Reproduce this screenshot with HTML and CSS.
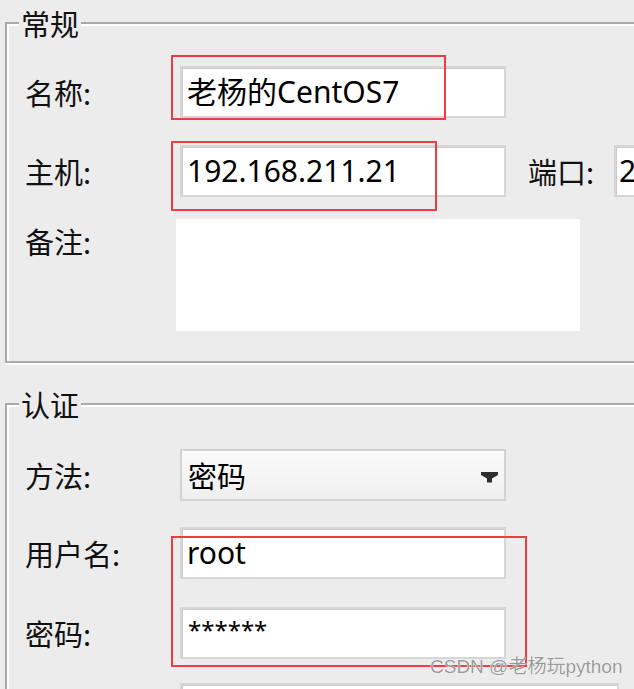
FILE: index.html
```html
<!DOCTYPE html>
<html lang="zh-CN">
<head>
<meta charset="utf-8">
<title>会话属性</title>
<link rel="stylesheet" href="styles.css">
</head>
<body>
<div class="page">
  <fieldset class="group general">
    <legend>常规</legend>
    <div class="row r-name">
      <span class="lbl">名称:</span>
      <div class="input w-std">老杨的CentOS7</div>
    </div>
    <div class="row r-host">
      <span class="lbl">主机:</span>
      <div class="input w-std">192.168.211.21</div>
      <span class="lbl-inline">端口:</span>
      <div class="input port">2</div>
    </div>
    <div class="row r-note">
      <span class="lbl">备注:</span>
      <div class="textarea"></div>
    </div>
  </fieldset>

  <fieldset class="group auth">
    <legend>认证</legend>
    <div class="row r-method">
      <span class="lbl">方法:</span>
      <div class="combo w-std">
        <span>密码</span>
        <svg class="arrow" width="17" height="11" viewBox="0 0 17 11"><path d="M0 0H17V3L11 6.5V10.5H6V6.5L0 3Z" fill="#2e2e2e"/></svg>
      </div>
    </div>
    <div class="row r-user">
      <span class="lbl">用户名:</span>
      <div class="input w-std">root</div>
    </div>
    <div class="row r-pass">
      <span class="lbl">密码:</span>
      <div class="input w-std pass">******</div>
    </div>
    <div class="row r-more">
      <span class="lbl"></span>
      <div class="input w-wide"></div>
    </div>
  </fieldset>
</div>

<div class="mark mark-name"></div>
<div class="mark mark-host"></div>
<div class="mark mark-cred"></div>
<div class="watermark">CSDN @老杨玩python</div>
</body>
</html>
```
FILE: styles.css
```css
html, body {
  margin: 0;
  height: 689px;
  overflow: hidden;
  background: #ececec;
}
body {
  position: relative;
  font-family: "Noto Sans", "Noto Sans CJK SC", sans-serif;
  color: #111;
}
.page {
  padding: 8px 0 0 5px;
  width: 760px;
}
.group {
  margin: 0;
  padding: 28px 0 30px 18px;
  border: 2px solid #a9a9a9;
  border-right: none;
  box-shadow: inset 2px 2px 0 #fff, 0 2px 0 #fff;
  min-width: 0;
}
.group legend {
  font-family: "Noto Sans CJK SC", sans-serif;
  font-size: 29px;
  line-height: 30px;
  padding: 0 2px;
  margin-left: -6px;
  background: #ececec;
}
.auth {
  margin-top: 26px;
  padding-top: 30px;
  padding-bottom: 0;
  height: 320px;
}
.row {
  display: flex;
  align-items: center;
  height: 52px;
}
.r-host { margin-top: 27px; }
.r-note { margin-top: 22px; height: 112px; align-items: flex-start; }
.r-user { margin-top: 26px; }
.r-pass { margin-top: 28px; }
.r-more { margin-top: 24px; }

.lbl, .lbl-inline {
  font-family: "Noto Sans CJK SC", sans-serif;
  font-size: 29px;
  line-height: 40px;
}
.lbl {
  width: 155px;
  flex: none;
}
.r-note .lbl { line-height: 44px; }
.lbl-inline {
  margin-left: 22px;
  margin-right: 20px;
}
.input, .combo {
  box-sizing: border-box;
  height: 52px;
  border: 2px solid #d6d6d6;
  box-shadow: inset 1px 1px 0 #cbcbcb;
  background: #fff;
  font-size: 30px;
  line-height: 48px;
  padding-left: 5px;
  white-space: nowrap;
  flex: none;
  color: #000;
}
.w-std { width: 326px; }
.w-wide { width: 439px; }
.port { width: 80px; padding-left: 3px; }
.pass { line-height: 42px; font-size: 24px; padding-left: 6px; }
.textarea {
  width: 404px;
  height: 112px;
  margin-left: -4px;
  background: #fff;
  flex: none;
}
.combo {
  display: flex;
  align-items: center;
  justify-content: space-between;
  padding-left: 6px;
  padding-right: 6px;
  background: linear-gradient(#fbfbfb, #efefef);
  box-shadow: none;
  border-color: #d3d3d3;
}
.combo span {
  font-family: "Noto Sans CJK SC", sans-serif;
  font-size: 29px;
}
.arrow { margin-top: 4px; }

.mark {
  position: absolute;
  box-sizing: border-box;
  border: 2px solid #ec3d45;
}
.mark-name { left: 171px; top: 55px; width: 275px; height: 65px; }
.mark-host { left: 171px; top: 141px; width: 266px; height: 70px; }
.mark-cred { left: 171px; top: 536px; width: 356px; height: 131px; }

.watermark {
  position: absolute;
  left: 430px;
  top: 653px;
  font-family: "Liberation Sans", "Noto Sans CJK SC", sans-serif;
  font-size: 19px;
  line-height: 28px;
  color: rgba(120, 120, 120, 0.75);
  text-shadow: 0 0 1px #fff, 0 0 1px #fff;
  white-space: nowrap;
}
```
